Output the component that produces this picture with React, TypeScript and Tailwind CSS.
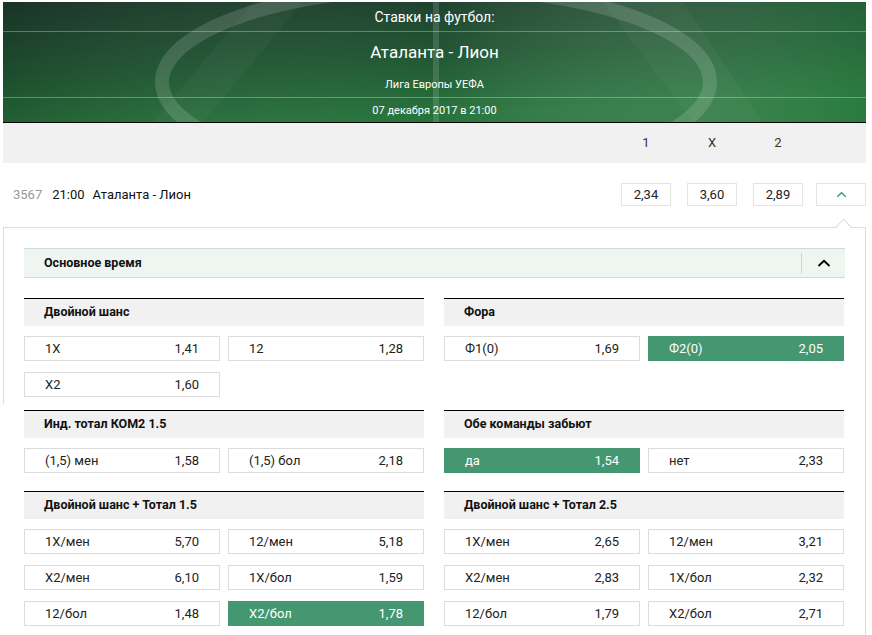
import React from 'react';

type Odd = { label: string; value: string; active?: boolean };
type Market = { title: string; odds: Odd[] };

const rows: { left: Market; right: Market; mt: string }[] = [
  {
    mt: 'mt-[20px]',
    left: {
      title: 'Двойной шанс',
      odds: [
        { label: '1X', value: '1,41' },
        { label: '12', value: '1,28' },
        { label: 'X2', value: '1,60' },
      ],
    },
    right: {
      title: 'Фора',
      odds: [
        { label: 'Ф1(0)', value: '1,69' },
        { label: 'Ф2(0)', value: '2,05', active: true },
      ],
    },
  },
  {
    mt: 'mt-[13px]',
    left: {
      title: 'Инд. тотал КОМ2 1.5',
      odds: [
        { label: '(1,5) мен', value: '1,58' },
        { label: '(1,5) бол', value: '2,18' },
      ],
    },
    right: {
      title: 'Обе команды забьют',
      odds: [
        { label: 'да', value: '1,54', active: true },
        { label: 'нет', value: '2,33' },
      ],
    },
  },
  {
    mt: 'mt-[18px]',
    left: {
      title: 'Двойной шанс + Тотал 1.5',
      odds: [
        { label: '1X/мен', value: '5,70' },
        { label: '12/мен', value: '5,18' },
        { label: 'X2/мен', value: '6,10' },
        { label: '1X/бол', value: '1,59' },
        { label: '12/бол', value: '1,48' },
        { label: 'X2/бол', value: '1,78', active: true },
      ],
    },
    right: {
      title: 'Двойной шанс + Тотал 2.5',
      odds: [
        { label: '1X/мен', value: '2,65' },
        { label: '12/мен', value: '3,21' },
        { label: 'X2/мен', value: '2,83' },
        { label: '1X/бол', value: '2,32' },
        { label: '12/бол', value: '1,79' },
        { label: 'X2/бол', value: '2,71' },
      ],
    },
  },
];

// field drawing behind the header texts
const FieldBg = () => (
  <svg className="absolute inset-0" width="863" height="120" viewBox="0 0 863 120">
    <defs>
      <linearGradient id="field" x1="0" y1="0" x2="0.35" y2="1">
        <stop offset="0%" stopColor="#1d3a2c" />
        <stop offset="55%" stopColor="#215733" />
        <stop offset="100%" stopColor="#27733c" />
      </linearGradient>
      <linearGradient id="glow" x1="0" y1="0" x2="1" y2="0">
        <stop offset="0%" stopColor="#000" stopOpacity="0.12" />
        <stop offset="50%" stopColor="#fff" stopOpacity="0" />
        <stop offset="100%" stopColor="#2f8a48" stopOpacity="0.35" />
      </linearGradient>
    </defs>
    <rect width="863" height="120" fill="url(#field)" />
    <rect width="863" height="120" fill="url(#glow)" />
    <polygon points="250,0 300,0 200,120 150,120" fill="#fff" opacity="0.03" />
    <polygon points="600,0 680,0 760,120 690,120" fill="#fff" opacity="0.03" />
    <ellipse cx="433" cy="80" rx="274" ry="94" fill="none" stroke="#fff" strokeOpacity="0.14" strokeWidth="14" />
    <rect x="430" y="0" width="6" height="120" fill="#fff" opacity="0.14" />
    <rect x="0" y="29" width="863" height="1" fill="#fff" opacity="0.3" />
    <rect x="0" y="95" width="863" height="1" fill="#fff" opacity="0.3" />
  </svg>
);

const Chevron = ({ className }: { className?: string }) => (
  <svg className={className} viewBox="0 0 14 8" fill="none">
    <polyline points="1.5,7 7,1.8 12.5,7" stroke="currentColor" strokeWidth="1.8" />
  </svg>
);

const OddButton = ({ odd }: { odd: Odd }) => (
  <div
    className={
      odd.active
        ? 'h-[25px] flex items-center justify-between px-5 bg-[#449771] border border-[#449771] text-white text-[13px]'
        : 'h-[25px] flex items-center justify-between px-5 bg-white border border-[#dcdcdc] text-[#222] text-[13px]'
    }
  >
    <span>{odd.label}</span>
    <span>{odd.value}</span>
  </div>
);

const MarketBlock = ({ market }: { market: Market }) => (
  <div>
    <div className="h-[28px] border-t border-black bg-[#f1f1f1] pl-5 flex items-center font-bold text-[12.5px] text-[#111]">
      {market.title}
    </div>
    <div className="mt-[10px] grid grid-cols-2 gap-x-[8px] gap-y-[11px]">
      {market.odds.map((o, i) => (
        <OddButton key={i} odd={o} />
      ))}
    </div>
  </div>
);

export default function App() {
  return (
    <div className="w-[872px] h-[635px] overflow-hidden bg-white font-['Roboto',sans-serif] text-[#222]">
      <div className="ml-[3px] mt-[2px] w-[863px]">
        {/* Header */}
        <div className="relative h-[120px] text-white text-center">
          <FieldBg />
          <div className="relative flex flex-col">
            <div className="h-[29px] flex items-center justify-center text-[14px] pt-[1px]">Ставки на футбол:</div>
            <div className="h-[38px] flex items-center justify-center text-[17px] mt-[3px]">Аталанта - Лион</div>
            <div className="h-[27px] flex items-center justify-center text-[11px]">Лига Европы УЕФА</div>
            <div className="h-[23px] flex items-center justify-center text-[11px] mt-[1px]">07 декабря 2017 в 21:00</div>
          </div>
        </div>
        <div className="h-px bg-black" />

        {/* 1 X 2 bar */}
        <div className="h-[40px] bg-[#f1f1f1] flex items-center justify-end text-[13px] text-[#333]">
          <div className="w-[50px] text-center">1</div>
          <div className="w-[50px] text-center ml-[16px]">X</div>
          <div className="w-[50px] text-center ml-[16px]">2</div>
          <div className="w-[50px] ml-[13px]" />
        </div>

        {/* match row */}
        <div className="h-[64px] pt-[20px] flex items-start text-[13px]">
          <div className="h-[23px] flex items-center pl-[10px]">
            <span className="text-[#999]">3567</span>
            <span className="ml-[10px] text-[#111]">21:00</span>
            <span className="ml-[8px] text-[#111]">Аталанта - Лион</span>
          </div>
          <div className="ml-auto flex items-center">
            {['2,34', '3,60', '2,89'].map((v, i) => (
              <div
                key={v}
                className={
                  'w-[50px] h-[23px] border border-[#e4e4e4] flex items-center justify-center text-[13px] ' +
                  (i > 0 ? 'ml-[16px]' : '')
                }
              >
                {v}
              </div>
            ))}
            <div className="w-[50px] h-[23px] ml-[13px] border border-[#e4e4e4] flex items-center justify-center text-[#3b9a79]">
              <Chevron className="w-[11px] h-[7px]" />
            </div>
          </div>
        </div>

        {/* expanded panel */}
        <div className="relative border-t border-r border-[#dddddd] pl-[21px] pr-5 pb-10 before:absolute before:left-0 before:top-0 before:h-[176px] before:w-px before:bg-[#dddddd]">
          <div className="absolute left-[835px] top-[-7px] w-[11px] h-[11px] rotate-45 bg-white border-t border-l border-[#dddddd]" />
          <div className="pt-5">
            <div className="h-[30px] border-y border-[#cfdcdc] bg-[#eff5f1] flex items-center pl-5">
              <span className="font-bold text-[12.5px] text-[#111]">Основное время</span>
              <div className="ml-auto h-[21px] w-px bg-[#cfd6d6]" />
              <div className="w-[43px] flex items-center justify-center text-black">
                <Chevron className="w-[14px] h-[8px]" />
              </div>
            </div>
            {rows.map((r, i) => (
              <div key={i} className={'grid grid-cols-[400px_400px] gap-x-5 items-start ' + r.mt}>
                <MarketBlock market={r.left} />
                <MarketBlock market={r.right} />
              </div>
            ))}
          </div>
        </div>
      </div>
    </div>
  );
}
